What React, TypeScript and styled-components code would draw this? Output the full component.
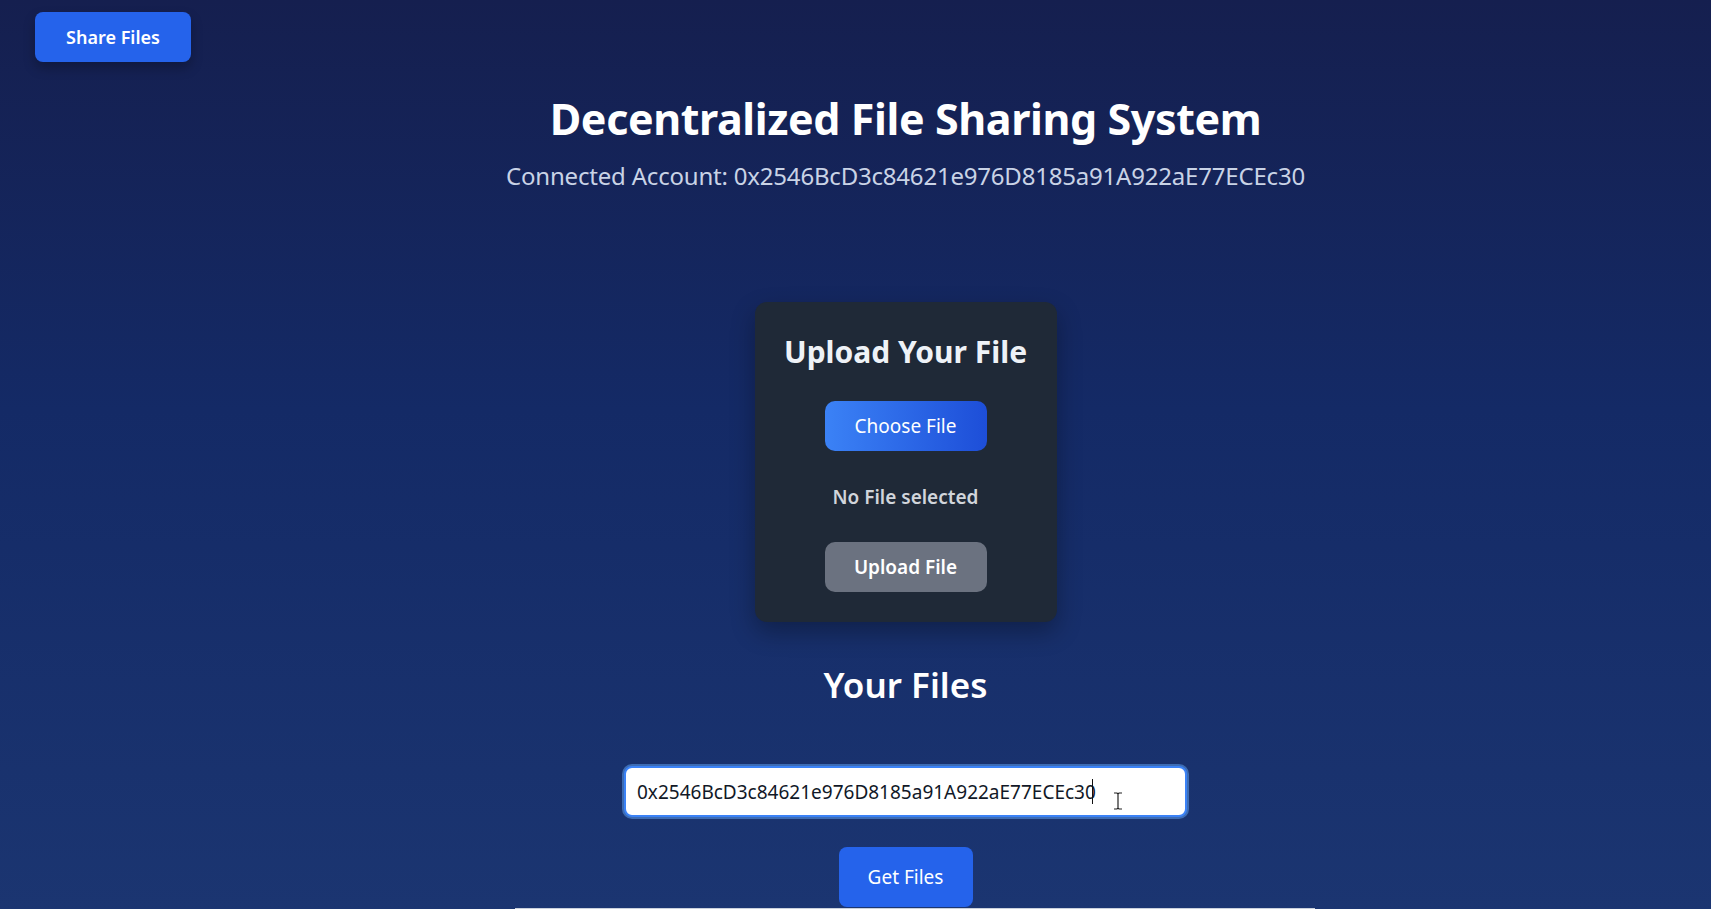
import { FC } from "react";
import styled, { createGlobalStyle } from "styled-components";

const ACCOUNT = "0x2546BcD3c84621e976D8185a91A922aE77ECEc30";

const GlobalStyle = createGlobalStyle`
  html, body {
    margin: 0;
    padding: 0;
  }
  body {
    font-family: "Noto Sans", "Open Sans", sans-serif;
    background: #141f4e;
  }
  * {
    box-sizing: border-box;
  }
`;

const Page = styled.div`
  height: 909px;
  overflow: hidden;
  background: linear-gradient(180deg, #151f4f 0%, #142a66 45%, #1b3571 100%);
  color: #ffffff;
  display: flex;
  flex-direction: column;
`;

const TopBar = styled.div`
  display: flex;
  padding: 12px 35px 0;
`;

const ShareButton = styled.button`
  width: 156px;
  height: 50px;
  border: none;
  border-radius: 8px;
  background: #2563eb;
  color: #fff;
  font-family: inherit;
  font-size: 18px;
  font-weight: 600;
  box-shadow: 0 6px 12px rgba(0, 0, 0, 0.25);
  cursor: pointer;
`;

const Main = styled.main`
  display: flex;
  flex-direction: column;
  align-items: center;
  padding-left: 100px;
`;

const Title = styled.h1`
  margin: 31px 0 0;
  font-size: 43px;
  font-weight: 700;
  letter-spacing: -0.4px;
  line-height: 1.2;
`;

const Account = styled.p`
  margin: 14px 0 0;
  font-size: 24px;
  letter-spacing: -0.2px;
  line-height: 1.4;
  color: #c9d3e6;
`;

const Card = styled.section`
  margin-top: 110px;
  width: 302px;
  padding: 30px 24px 30px;
  background: #1f2937;
  border-radius: 12px;
  box-shadow: 0 10px 25px rgba(0, 0, 0, 0.3);
  display: flex;
  flex-direction: column;
  align-items: center;
`;

const CardTitle = styled.h2`
  margin: 0;
  font-size: 30px;
  font-weight: 700;
  line-height: 1.3;
  color: #eef2f7;
`;

const ActionButton = styled.button<{ $variant: "primary" | "muted" }>`
  width: 162px;
  height: 50px;
  border: none;
  border-radius: 10px;
  font-family: inherit;
  font-size: 19px;
  color: #fff;
  cursor: pointer;
  font-weight: ${(p) => (p.$variant === "muted" ? 600 : 400)};
  background: ${(p) =>
    p.$variant === "muted"
      ? "#6b7280"
      : "linear-gradient(90deg, #3b82f6 0%, #1d4ed8 100%)"};
`;

const ChooseButton = styled(ActionButton)`
  margin-top: 30px;
`;

const UploadButton = styled(ActionButton)`
  margin-top: 31px;
`;

const FileStatus = styled.p`
  margin: 33px 0 0;
  font-size: 19px;
  font-weight: 600;
  line-height: 1.4;
  color: #d1d5db;
`;

const SectionTitle = styled.h2`
  margin: 40px 0 0;
  font-size: 35px;
  font-weight: 600;
  line-height: 1.3;
`;

const AddressField = styled.div`
  position: relative;
  margin-top: 59px;
`;

const AddressInput = styled.input`
  width: 563px;
  height: 51px;
  padding: 0 11px;
  border: 2px solid #3b82f6;
  border-radius: 8px;
  background: #fff;
  color: #111827;
  font-family: inherit;
  font-size: 19px;
  outline: none;
  box-shadow: 0 0 0 2px rgba(96, 165, 250, 0.5);
`;

const Caret = styled.span`
  position: absolute;
  left: 468px;
  top: 13px;
  width: 1px;
  height: 25px;
  background: #111;
  pointer-events: none;
`;

const IBeam = styled.svg`
  position: absolute;
  left: 489px;
  top: 26px;
  pointer-events: none;
`;

const GetButton = styled.button`
  margin-top: 30px;
  width: 134px;
  height: 60px;
  border: none;
  border-radius: 8px;
  background: #2563eb;
  color: #fff;
  font-family: inherit;
  font-size: 19px;
  cursor: pointer;
`;

const FileList = styled.div`
  margin: 1px 0 0 18px;
  width: 800px;
  height: 10px;
  background: #cad1dd;
`;

const App: FC = () => {
  return (
    <>
      <GlobalStyle />
      <Page>
        <TopBar>
          <ShareButton>Share Files</ShareButton>
        </TopBar>
        <Main>
          <Title>Decentralized File Sharing System</Title>
          <Account>Connected Account: {ACCOUNT}</Account>
          <Card>
            <CardTitle>Upload Your File</CardTitle>
            <ChooseButton $variant="primary">Choose File</ChooseButton>
            <FileStatus>No File selected</FileStatus>
            <UploadButton $variant="muted">Upload File</UploadButton>
          </Card>
          <SectionTitle>Your Files</SectionTitle>
          <AddressField>
            <AddressInput defaultValue={ACCOUNT} />
            <Caret />
            <IBeam width="10" height="18" viewBox="0 0 10 18">
              <path
                d="M1 1h3l1 1 1-1h3M5 2v14M1 17h3l1-1 1 1h3"
                fill="none"
                stroke="#222"
                strokeWidth="1.2"
              />
            </IBeam>
          </AddressField>
          <GetButton>Get Files</GetButton>
          <FileList />
        </Main>
      </Page>
    </>
  );
};

export default App;
